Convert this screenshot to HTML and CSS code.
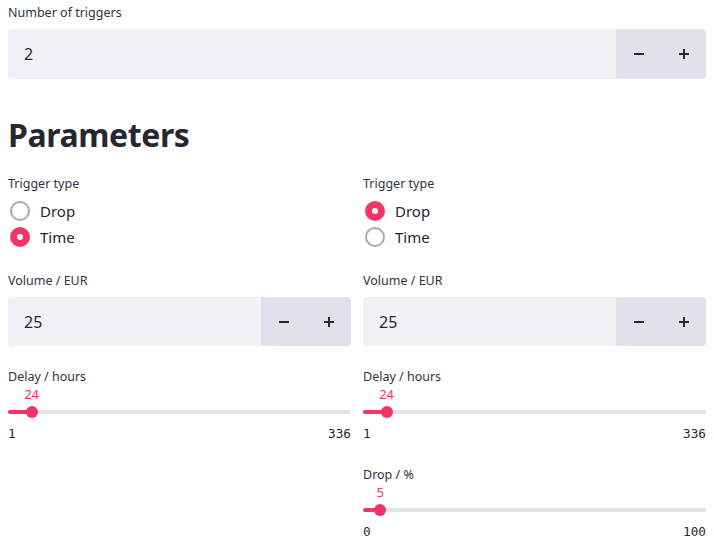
FILE: index.html
```html
<!DOCTYPE html>
<html lang="en">
<head>
<meta charset="utf-8">
<title>Parameters</title>
<link rel="stylesheet" href="styles.css">
</head>
<body>
<div class="page">
  <div class="widget">
    <div class="lbl">Number of triggers</div>
    <div class="num">
      <div class="num-val">2</div>
      <button class="step"><svg width="10" height="10" viewBox="0 0 10 10"><path d="M0 5H10" stroke="#262730" stroke-width="2"/></svg></button>
      <button class="step"><svg width="10" height="10" viewBox="0 0 10 10"><path d="M0 5H10M5 0V10" stroke="#262730" stroke-width="2"/></svg></button>
    </div>
  </div>

  <h1 class="title">Parameters</h1>

  <div class="cols">
    <div class="col">
      <div class="widget">
        <div class="lbl">Trigger type</div>
        <div class="radios">
          <div class="radio"><span class="dot"></span>Drop</div>
          <div class="radio"><span class="dot on"></span>Time</div>
        </div>
      </div>
      <div class="widget">
        <div class="lbl">Volume / EUR</div>
        <div class="num small">
          <div class="num-val">25</div>
          <button class="step"><svg width="10" height="10" viewBox="0 0 10 10"><path d="M0 5H10" stroke="#262730" stroke-width="2"/></svg></button>
          <button class="step"><svg width="10" height="10" viewBox="0 0 10 10"><path d="M0 5H10M5 0V10" stroke="#262730" stroke-width="2"/></svg></button>
        </div>
      </div>
      <div class="widget">
        <div class="lbl">Delay / hours</div>
        <div class="slider">
          <div class="val-row"><span class="val" style="left: 6.87%">24</span></div>
          <div class="track-area">
            <div class="track"><div class="fill" style="width: 6.87%"></div><div class="thumb" style="left: 6.87%"></div></div>
          </div>
          <div class="minmax"><span>1</span><span>336</span></div>
        </div>
      </div>
    </div>

    <div class="col">
      <div class="widget">
        <div class="lbl">Trigger type</div>
        <div class="radios">
          <div class="radio"><span class="dot on"></span>Drop</div>
          <div class="radio"><span class="dot"></span>Time</div>
        </div>
      </div>
      <div class="widget">
        <div class="lbl">Volume / EUR</div>
        <div class="num small">
          <div class="num-val">25</div>
          <button class="step"><svg width="10" height="10" viewBox="0 0 10 10"><path d="M0 5H10" stroke="#262730" stroke-width="2"/></svg></button>
          <button class="step"><svg width="10" height="10" viewBox="0 0 10 10"><path d="M0 5H10M5 0V10" stroke="#262730" stroke-width="2"/></svg></button>
        </div>
      </div>
      <div class="widget">
        <div class="lbl">Delay / hours</div>
        <div class="slider">
          <div class="val-row"><span class="val" style="left: 6.87%">24</span></div>
          <div class="track-area">
            <div class="track"><div class="fill" style="width: 6.87%"></div><div class="thumb" style="left: 6.87%"></div></div>
          </div>
          <div class="minmax"><span>1</span><span>336</span></div>
        </div>
      </div>
      <div class="widget">
        <div class="lbl">Drop / %</div>
        <div class="slider">
          <div class="val-row"><span class="val" style="left: 5%">5</span></div>
          <div class="track-area">
            <div class="track"><div class="fill" style="width: 5%"></div><div class="thumb" style="left: 5%"></div></div>
          </div>
          <div class="minmax"><span>0</span><span>100</span></div>
        </div>
      </div>
    </div>
  </div>
</div>
</body>
</html>
```

FILE: styles.css
```css
* { box-sizing: border-box; }
html, body { margin: 0; padding: 0; background: #ffffff; }
body {
  font-family: "Noto Sans", "Open Sans", sans-serif;
  color: #262730;
}
.page {
  padding: 3px 8px 0 8px;
}
.widget { display: flex; flex-direction: column; }
.lbl {
  font-size: 12.5px;
  line-height: 20px;
  height: 20px;
  color: #31333f;
  margin-bottom: 4px;
}
.num {
  display: flex;
  height: 50px;
  margin-top: 2px;
  border-radius: 4px;
  overflow: hidden;
  background: #f0f2f6;
}
.num.small { height: 49px; margin-top: 2px; }
.num-val {
  flex: 1;
  display: flex;
  align-items: center;
  padding-left: 16px;
  font-size: 16px;
  color: #262730;
}
.step {
  width: 45px;
  border: 0;
  padding: 0;
  margin: 0;
  background: #dfe2ea;
  display: flex;
  align-items: center;
  justify-content: center;
}
.title {
  font-family: "Noto Sans", sans-serif;
  font-weight: 700;
  font-size: 32px;
  line-height: 44px;
  margin: 34px 0 17px 0;
  color: #262730;
  letter-spacing: -0.4px;
}
.cols {
  display: grid;
  grid-template-columns: 1fr 1fr;
  column-gap: 12px;
  align-items: start;
}
.col { display: flex; flex-direction: column; gap: 21px; }
.radios { display: flex; flex-direction: column; }
.radio {
  display: flex;
  align-items: center;
  height: 26px;
  font-size: 15px;
  gap: 10px;
  color: #262730;
}
.dot {
  width: 20px;
  height: 20px;
  margin-left: 2px;
  border-radius: 50%;
  border: 2px solid #a6a9b3;
  background: #fff;
  position: relative;
}
.dot.on {
  border: 0;
  background: #f63366;
}
.dot.on::after {
  content: "";
  position: absolute;
  left: 7px;
  top: 7px;
  width: 6px;
  height: 6px;
  border-radius: 50%;
  background: #fff;
}
.slider { display: flex; flex-direction: column; margin-top: -5px; }
.val-row { position: relative; height: 16px; }
.val {
  position: absolute;
  top: 0;
  transform: translateX(-50%);
  font-size: 13px;
  line-height: 16px;
  color: #f63366;
}
.track-area { height: 20px; display: flex; align-items: center; }
.track {
  position: relative;
  width: 100%;
  height: 4px;
  border-radius: 2px;
  background: #e0e3ea;
}
.fill {
  position: absolute;
  left: 0; top: 0; bottom: 0;
  background: #f63366;
  border-radius: 2px;
}
.thumb {
  position: absolute;
  top: 50%;
  width: 12px;
  height: 12px;
  margin-left: -6px;
  margin-top: -6px;
  border-radius: 50%;
  background: #f63366;
}
.minmax {
  display: flex;
  justify-content: space-between;
  margin-top: 3px;
  height: 19px;
  line-height: 17px;
  font-family: "DejaVu Sans Mono", monospace;
  font-size: 12.7px;
  color: #262730;
}
```
